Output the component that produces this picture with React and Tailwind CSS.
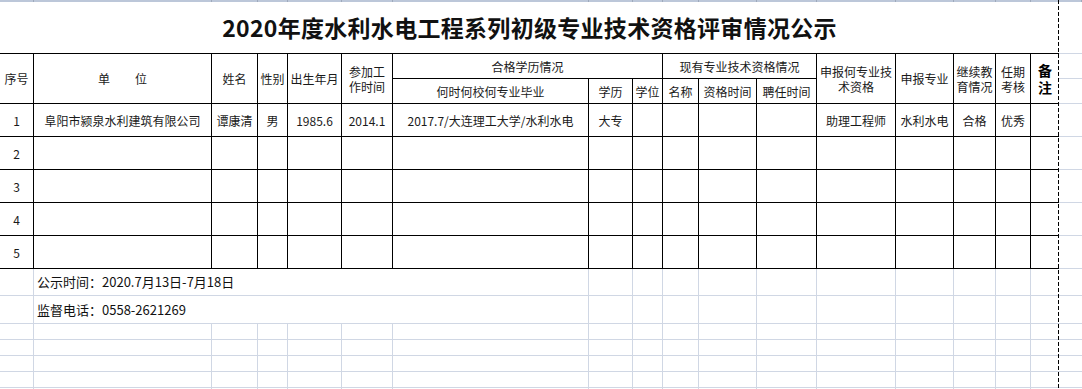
import React from "react";

const F = "font-['Noto_Sans_CJK_SC','Liberation_Sans',sans-serif]";
const H = "flex items-center justify-center text-center text-[12px] leading-[15px] text-[#1a1a1a] border-r border-b border-black";
const HL = "flex items-center justify-center text-center text-[12px] leading-[15px] text-[#1a1a1a] border-b border-black";
const LG = "border-r border-b border-[#d0d7e4]";
const LGB = "border-b border-[#d0d7e4]";

const topCells = Array.from({ length: 18 });
const emptyData = [2, 3, 4, 5];
const footerExtra = [0, 1, 2, 3, 4];

function DataRow({ n, vals }) {
  const v = vals || [];
  return (
    <>
      <div className={H}>{n}</div>
      <div className={H}>{v[0]}</div>
      <div className={H}>{v[1]}</div>
      <div className={H}>{v[2]}</div>
      <div className={H}>{v[3]}</div>
      <div className={H}>{v[4]}</div>
      <div className={H}>{v[5]}</div>
      <div className={H}>{v[6]}</div>
      <div className={H}></div>
      <div className={H}></div>
      <div className={H}></div>
      <div className={H}></div>
      <div className={H}>{v[7]}</div>
      <div className={H}>{v[8]}</div>
      <div className={H}>{v[9]}</div>
      <div className={H}>{v[10]}</div>
      <div className={HL}></div>
      <div className={LGB}></div>
    </>
  );
}

export default function App() {
  return (
    <div className={`relative w-[1082px] h-[389px] overflow-hidden bg-white ${F}`}>
      <div className="grid grid-cols-[34px_178px_46px_30px_54px_51px_196px_44px_30px_36px_58px_60px_79px_58px_42px_35px_28px_23px] grid-rows-[2px_52px_25px_25px_33px_33px_33px_33px_33px_27px_28px_16px_16px_16px_16px_16px_16px]">
        {/* top strip */}
        {topCells.map((_, i) => (
          <div key={i} className="bg-[#bcc7d9] border-r border-[#9ea9bb]"></div>
        ))}

        {/* title */}
        <div className="col-span-17 flex items-center justify-center border-b border-black text-[23px] font-bold text-[#111] tracking-[0.3px]">
          2020年度水利水电工程系列初级专业技术资格评审情况公示
        </div>
        <div className={LGB}></div>

        {/* header row 1 */}
        <div className={`${H} row-span-2`}>序号</div>
        <div className={`${H} row-span-2 gap-[25px]`}>
          <span>单</span>
          <span>位</span>
        </div>
        <div className={`${H} row-span-2`}>姓名</div>
        <div className={`${H} row-span-2`}>性别</div>
        <div className={`${H} row-span-2`}>出生年月</div>
        <div className={`${H} row-span-2 flex-col`}>
          <span>参加工</span>
          <span>作时间</span>
        </div>
        <div className={`${H} col-span-3`}>合格学历情况</div>
        <div className={`${H} col-span-3`}>现有专业技术资格情况</div>
        <div className={`${H} row-span-2 flex-col`}>
          <span>申报何专业技</span>
          <span>术资格</span>
        </div>
        <div className={`${H} row-span-2`}>申报专业</div>
        <div className={`${H} row-span-2 flex-col`}>
          <span>继续教</span>
          <span>育情况</span>
        </div>
        <div className={`${H} row-span-2 flex-col`}>
          <span>任期</span>
          <span>考核</span>
        </div>
        <div className="row-span-2 flex flex-col items-center justify-center border-b border-black text-[14px] leading-[17px] font-bold text-black">
          <span className="block leading-[17px]">备</span>
          <span className="block leading-[17px]">注</span>
        </div>
        <div className={LGB}></div>

        {/* header row 2 */}
        <div className={H}>何时何校何专业毕业</div>
        <div className={H}>学历</div>
        <div className={H}>学位</div>
        <div className={H}>名称</div>
        <div className={H}>资格时间</div>
        <div className={H}>聘任时间</div>
        <div className={LGB}></div>

        {/* data */}
        <DataRow
          n="1"
          vals={[
            "阜阳市颍泉水利建筑有限公司",
            "谭康清",
            "男",
            "1985.6",
            "2014.1",
            "2017.7/大连理工大学/水利水电",
            "大专",
            "助理工程师",
            "水利水电",
            "合格",
            "优秀",
          ]}
        />
        {emptyData.map((n) => (
          <DataRow key={n} n={String(n)} />
        ))}

        {/* footer row 1 */}
        <div className={LG}></div>
        <div className={`${LG} col-span-6 flex items-center pl-[3px] text-[13px] text-[#111]`}>
          公示时间：2020.7月13日-7月18日
        </div>
        <div className={LG}></div>
        <div className={LG}></div>
        <div className={LG}></div>
        <div className={LG}></div>
        <div className={LG}></div>
        <div className={LG}></div>
        <div className={LG}></div>
        <div className={LG}></div>
        <div className={LG}></div>
        <div className={LGB}></div>
        <div className={LGB}></div>

        {/* footer row 2 */}
        <div className={LG}></div>
        <div className={`${LG} col-span-6 flex items-center pl-[3px] text-[13px] text-[#111]`}>
          监督电话：0558-2621269
        </div>
        <div className={LG}></div>
        <div className={LG}></div>
        <div className={LG}></div>
        <div className={LG}></div>
        <div className={LG}></div>
        <div className={LG}></div>
        <div className={LG}></div>
        <div className={LG}></div>
        <div className={LG}></div>
        <div className={LGB}></div>
        <div className={LGB}></div>

        {/* empty grid rows */}
        {footerExtra.map((r) => (
          <React.Fragment key={r}>
            {Array.from({ length: 16 }).map((_, i) => (
              <div key={i} className={LG}></div>
            ))}
            <div className={LGB}></div>
            <div className={LGB}></div>
          </React.Fragment>
        ))}
      </div>

      {/* page break dashed line */}
      <div className="absolute left-[1058px] top-0 h-full w-px bg-[repeating-linear-gradient(to_bottom,#000_0_4px,transparent_4px_6px)]"></div>
    </div>
  );
}
